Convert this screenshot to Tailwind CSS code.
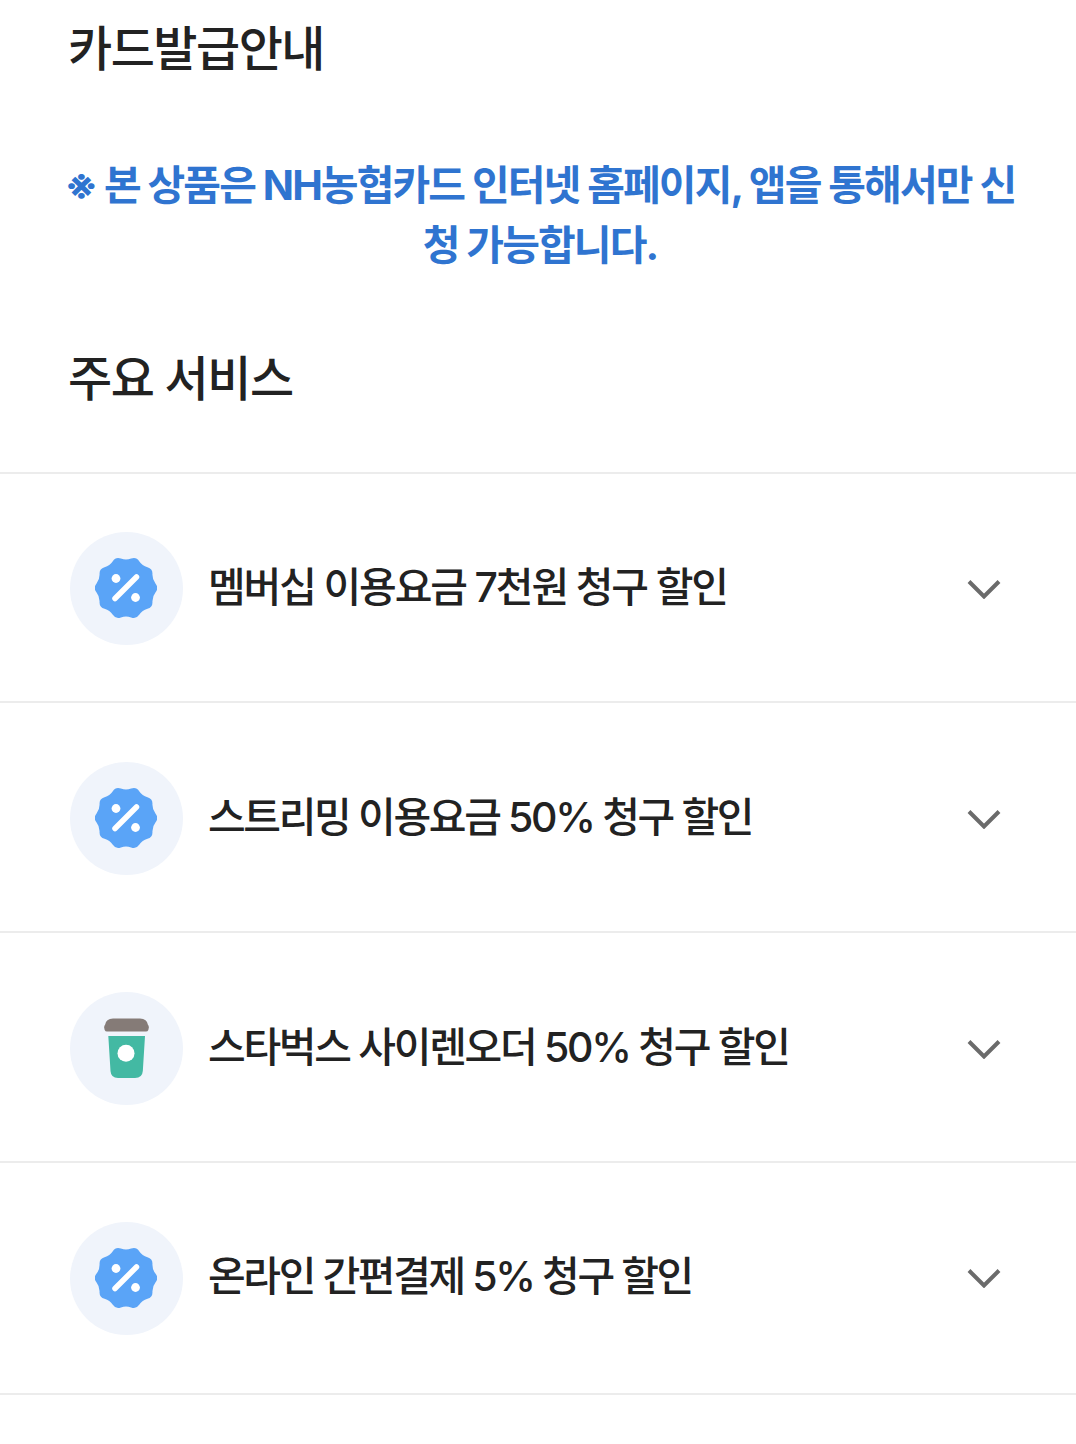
<!DOCTYPE html>
<html lang="ko">
<head>
    <meta charset="UTF-8">
    <meta name="viewport" content="width=device-width, initial-scale=1.0">
    <title>카드발급안내</title>
    <script src="https://cdn.jsdelivr.net/npm/@tailwindcss/browser@4"></script>
</head>
<body class="bg-white text-[#222222] font-['Inter','Noto_Sans_CJK_KR',sans-serif] overflow-hidden">
    <div class="w-[1076px] h-[1444px]">
        <!-- Card issue notice -->
        <section class="px-[68px]">
            <h2 class="h-[98px] leading-[98px] text-[48px] font-medium tracking-[-1.5px]">카드발급안내</h2>
            <p class="mt-[57px] text-center text-[41px] leading-[60px] font-bold tracking-[-1.9px] text-[#2f74d0] -ml-[8px] -mr-[12px] break-all">※ 본 상품은 NH농협카드 인터넷 홈페이지, 앱을 통해서만 신청 가능합니다.</p>
            <h2 class="mt-[74px] h-[60px] leading-[60px] text-[48px] font-medium tracking-[-1.5px]">주요 서비스</h2>
        </section>

        <!-- Service list -->
        <ul class="mt-[63px] border-t-2 border-[#ececec]">
            <li class="h-[229px] pt-[1px] flex items-center pl-[70px] pr-[74px] border-b-2 border-[#ececec]">
                <div class="w-[113px] h-[113px] rounded-full bg-[#f0f4fb] flex items-center justify-center shrink-0">
                    <svg class="w-[62px] h-[62px] -ml-[1px]" viewBox="-31 -31 62 62"><path fill="#5aa4f7" d="M29.6 -4.25Q33 0 29.6 4.25Q26.2 8.5 26.45 13.95Q26.7 19.4 21.45 20.8Q16.2 22.2 13.2 26.8Q10.2 31.4 5.1 29.45Q0 27.5 -5.1 29.45Q-10.2 31.4 -13.2 26.8Q-16.2 22.2 -21.45 20.8Q-26.7 19.4 -26.45 13.95Q-26.2 8.5 -29.6 4.25Q-33 0 -29.6 -4.25Q-26.2 -8.5 -26.45 -13.95Q-26.7 -19.4 -21.45 -20.8Q-16.2 -22.2 -13.2 -26.8Q-10.2 -31.4 -5.1 -29.45Q0 -27.5 5.1 -29.45Q10.2 -31.4 13.2 -26.8Q16.2 -22.2 21.45 -20.8Q26.7 -19.4 26.45 -13.95Q26.2 -8.5 29.6 -4.25Z"/><circle cx="-10" cy="-9.5" r="4.4" fill="#fff"/><circle cx="9.5" cy="9.5" r="4.4" fill="#fff"/><path d="M-11 10.5L10.5 -11" stroke="#fff" stroke-width="5.5" stroke-linecap="round"/></svg>
                </div>
                <span class="ml-[25px] flex-1 text-[41px] font-medium tracking-[-2.15px] -mt-[1px]">멤버십 이용요금 7천원 청구 할인</span>
                <svg class="w-[36px] h-[20px] shrink-0 mt-[2px]" viewBox="0 0 36 20" fill="none"><path d="M3 2.500L18 17.500L33 2.500" stroke="#6b6b6b" stroke-width="4"/></svg>
            </li>
            <li class="h-[230px] pt-[2px] flex items-center pl-[70px] pr-[74px] border-b-2 border-[#ececec]">
                <div class="w-[113px] h-[113px] rounded-full bg-[#f0f4fb] flex items-center justify-center shrink-0">
                    <svg class="w-[62px] h-[62px] -ml-[1px]" viewBox="-31 -31 62 62"><path fill="#5aa4f7" d="M29.6 -4.25Q33 0 29.6 4.25Q26.2 8.5 26.45 13.95Q26.7 19.4 21.45 20.8Q16.2 22.2 13.2 26.8Q10.2 31.4 5.1 29.45Q0 27.5 -5.1 29.45Q-10.2 31.4 -13.2 26.8Q-16.2 22.2 -21.45 20.8Q-26.7 19.4 -26.45 13.95Q-26.2 8.5 -29.6 4.25Q-33 0 -29.6 -4.25Q-26.2 -8.5 -26.45 -13.95Q-26.7 -19.4 -21.45 -20.8Q-16.2 -22.2 -13.2 -26.8Q-10.2 -31.4 -5.1 -29.45Q0 -27.5 5.1 -29.45Q10.2 -31.4 13.2 -26.8Q16.2 -22.2 21.45 -20.8Q26.7 -19.4 26.45 -13.95Q26.2 -8.5 29.6 -4.25Z"/><circle cx="-10" cy="-9.5" r="4.4" fill="#fff"/><circle cx="9.5" cy="9.5" r="4.4" fill="#fff"/><path d="M-11 10.5L10.5 -11" stroke="#fff" stroke-width="5.5" stroke-linecap="round"/></svg>
                </div>
                <span class="ml-[25px] flex-1 text-[41px] font-medium tracking-[-2.35px] -mt-[1px]">스트리밍 이용요금 50% 청구 할인</span>
                <svg class="w-[36px] h-[20px] shrink-0 mt-[2px]" viewBox="0 0 36 20" fill="none"><path d="M3 2.500L18 17.500L33 2.500" stroke="#6b6b6b" stroke-width="4"/></svg>
            </li>
            <li class="h-[230px] pt-[2px] flex items-center pl-[70px] pr-[74px] border-b-2 border-[#ececec]">
                <div class="w-[113px] h-[113px] rounded-full bg-[#f0f4fb] flex items-center justify-center shrink-0">
                    <svg class="w-[113px] h-[113px]" viewBox="0 0 113 113"><path fill="#857b77" d="M35 33Q36 26.500 43 26.500H70Q77 26.500 78 33L79 36H34ZM34.300 33.500H78.700Q79.300 39.500 76 39.500H37Q33.700 39.500 34.300 33.500Z"/><path fill="#43b9a3" d="M38.300 44H75L72.800 79Q72.300 86 65 86H48Q41 86 40.500 79Z"/><circle cx="56" cy="61.300" r="8.500" fill="#fff"/></svg>
                </div>
                <span class="ml-[25px] flex-1 text-[41px] font-medium tracking-[-2.3px] -mt-[1px]">스타벅스 사이렌오더 50% 청구 할인</span>
                <svg class="w-[36px] h-[20px] shrink-0 mt-[2px]" viewBox="0 0 36 20" fill="none"><path d="M3 2.500L18 17.500L33 2.500" stroke="#6b6b6b" stroke-width="4"/></svg>
            </li>
            <li class="h-[232px] flex items-center pl-[70px] pr-[74px] border-b-2 border-[#ececec]">
                <div class="w-[113px] h-[113px] rounded-full bg-[#f0f4fb] flex items-center justify-center shrink-0">
                    <svg class="w-[62px] h-[62px] -ml-[1px]" viewBox="-31 -31 62 62"><path fill="#5aa4f7" d="M29.6 -4.25Q33 0 29.6 4.25Q26.2 8.5 26.45 13.95Q26.7 19.4 21.45 20.8Q16.2 22.2 13.2 26.8Q10.2 31.4 5.1 29.45Q0 27.5 -5.1 29.45Q-10.2 31.4 -13.2 26.8Q-16.2 22.2 -21.45 20.8Q-26.7 19.4 -26.45 13.95Q-26.2 8.5 -29.6 4.25Q-33 0 -29.6 -4.25Q-26.2 -8.5 -26.45 -13.95Q-26.7 -19.4 -21.45 -20.8Q-16.2 -22.2 -13.2 -26.8Q-10.2 -31.4 -5.1 -29.45Q0 -27.5 5.1 -29.45Q10.2 -31.4 13.2 -26.8Q16.2 -22.2 21.45 -20.8Q26.7 -19.4 26.45 -13.95Q26.2 -8.5 29.6 -4.25Z"/><circle cx="-10" cy="-9.5" r="4.4" fill="#fff"/><circle cx="9.5" cy="9.5" r="4.4" fill="#fff"/><path d="M-11 10.5L10.5 -11" stroke="#fff" stroke-width="5.5" stroke-linecap="round"/></svg>
                </div>
                <span class="ml-[25px] flex-1 text-[41px] font-medium tracking-[-2.4px] -mt-[3px]">온라인 간편결제 5% 청구 할인</span>
                <svg class="w-[36px] h-[20px] shrink-0 -mt-[1px]" viewBox="0 0 36 20" fill="none"><path d="M3 2.500L18 17.500L33 2.500" stroke="#6b6b6b" stroke-width="4"/></svg>
            </li>
        </ul>
    </div>
</body>
</html>
